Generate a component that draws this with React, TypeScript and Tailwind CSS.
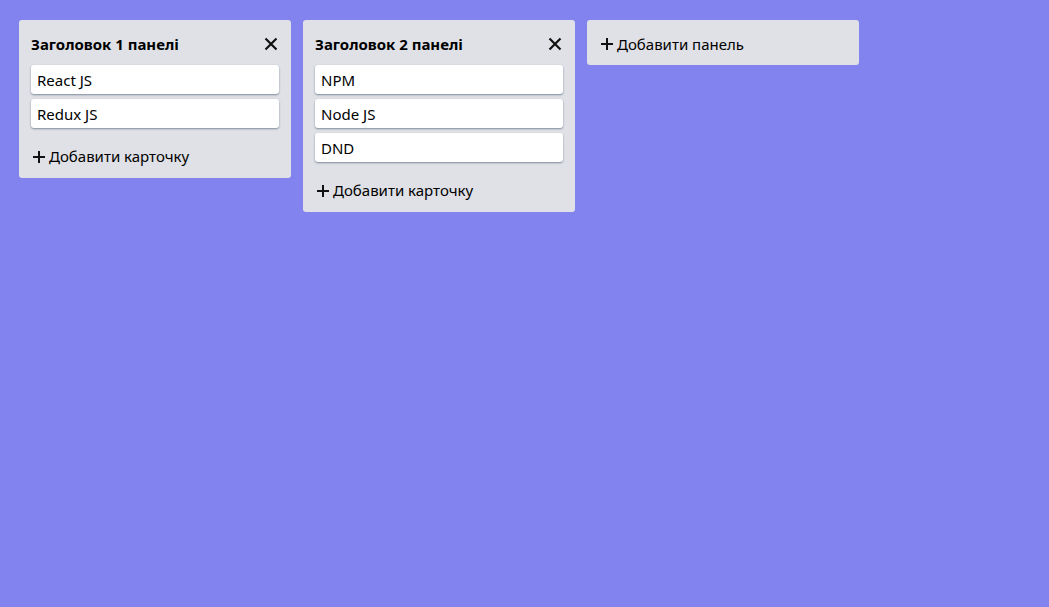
import { useState } from 'react';

type Column = {
    id: number;
    title: string;
    cards: string[];
};

const initial: Column[] = [
    { id: 1, title: 'Заголовок 1 панелі', cards: ['React JS', 'Redux JS'] },
    { id: 2, title: 'Заголовок 2 панелі', cards: ['NPM', 'Node JS', 'DND'] },
];

const CloseIcon = () => (
    <svg width="14" height="14" viewBox="0 0 14 14" fill="none">
        <path d="M1.5 1.5L12.5 12.5M12.5 1.5L1.5 12.5" stroke="#111" strokeWidth="2.2" />
    </svg>
);

const PlusIcon = () => (
    <svg width="12" height="12" viewBox="0 0 12 12" fill="none" className="ml-[2px]">
        <path d="M6 0V12M0 6H12" stroke="#111" strokeWidth="2" />
    </svg>
);

const App = () => {
    const [columns] = useState(initial);

    return (
        <div
            className="w-full min-h-screen bg-[#8383f0] p-[20px_19px] flex items-start gap-3 text-[15px] text-black"
            style={{ fontFamily: '"Noto Sans", "Open Sans", sans-serif' }}
        >
            {columns.map((col) => (
                <div key={col.id} className="w-[272px] shrink-0 bg-[#dfe1e6] rounded-[3px] px-3 pt-[12px] pb-3">
                    <div className="flex items-center justify-between h-6">
                        <div className="font-bold text-[15px] pt-[1px]">{col.title}</div>
                        <button className="w-4 h-5 flex items-center justify-center">
                            <CloseIcon />
                        </button>
                    </div>
                    <div className="flex flex-col gap-[5px] mt-[9px]">
                        {col.cards.map((card) => (
                            <div
                                key={card}
                                className="h-[29px] bg-white rounded-[3px] shadow-[0_1px_2px_rgba(9,30,66,0.45)] pl-[6px] pt-[2px] flex items-center"
                            >
                                {card}
                            </div>
                        ))}
                    </div>
                    <button className="mt-[17px] h-[21px] pt-[2px] flex items-center gap-[4px]">
                        <PlusIcon />
                        <span>Добавити карточку</span>
                    </button>
                </div>
            ))}
            <div className="w-[272px] shrink-0 bg-[#dfe1e6] rounded-[3px] px-3 pt-[13px] pb-[11px]">
                <button className="h-[21px] pt-[1px] flex items-center gap-[4px]">
                    <PlusIcon />
                    <span>Добавити панель</span>
                </button>
            </div>
        </div>
    );
};

export default App;
